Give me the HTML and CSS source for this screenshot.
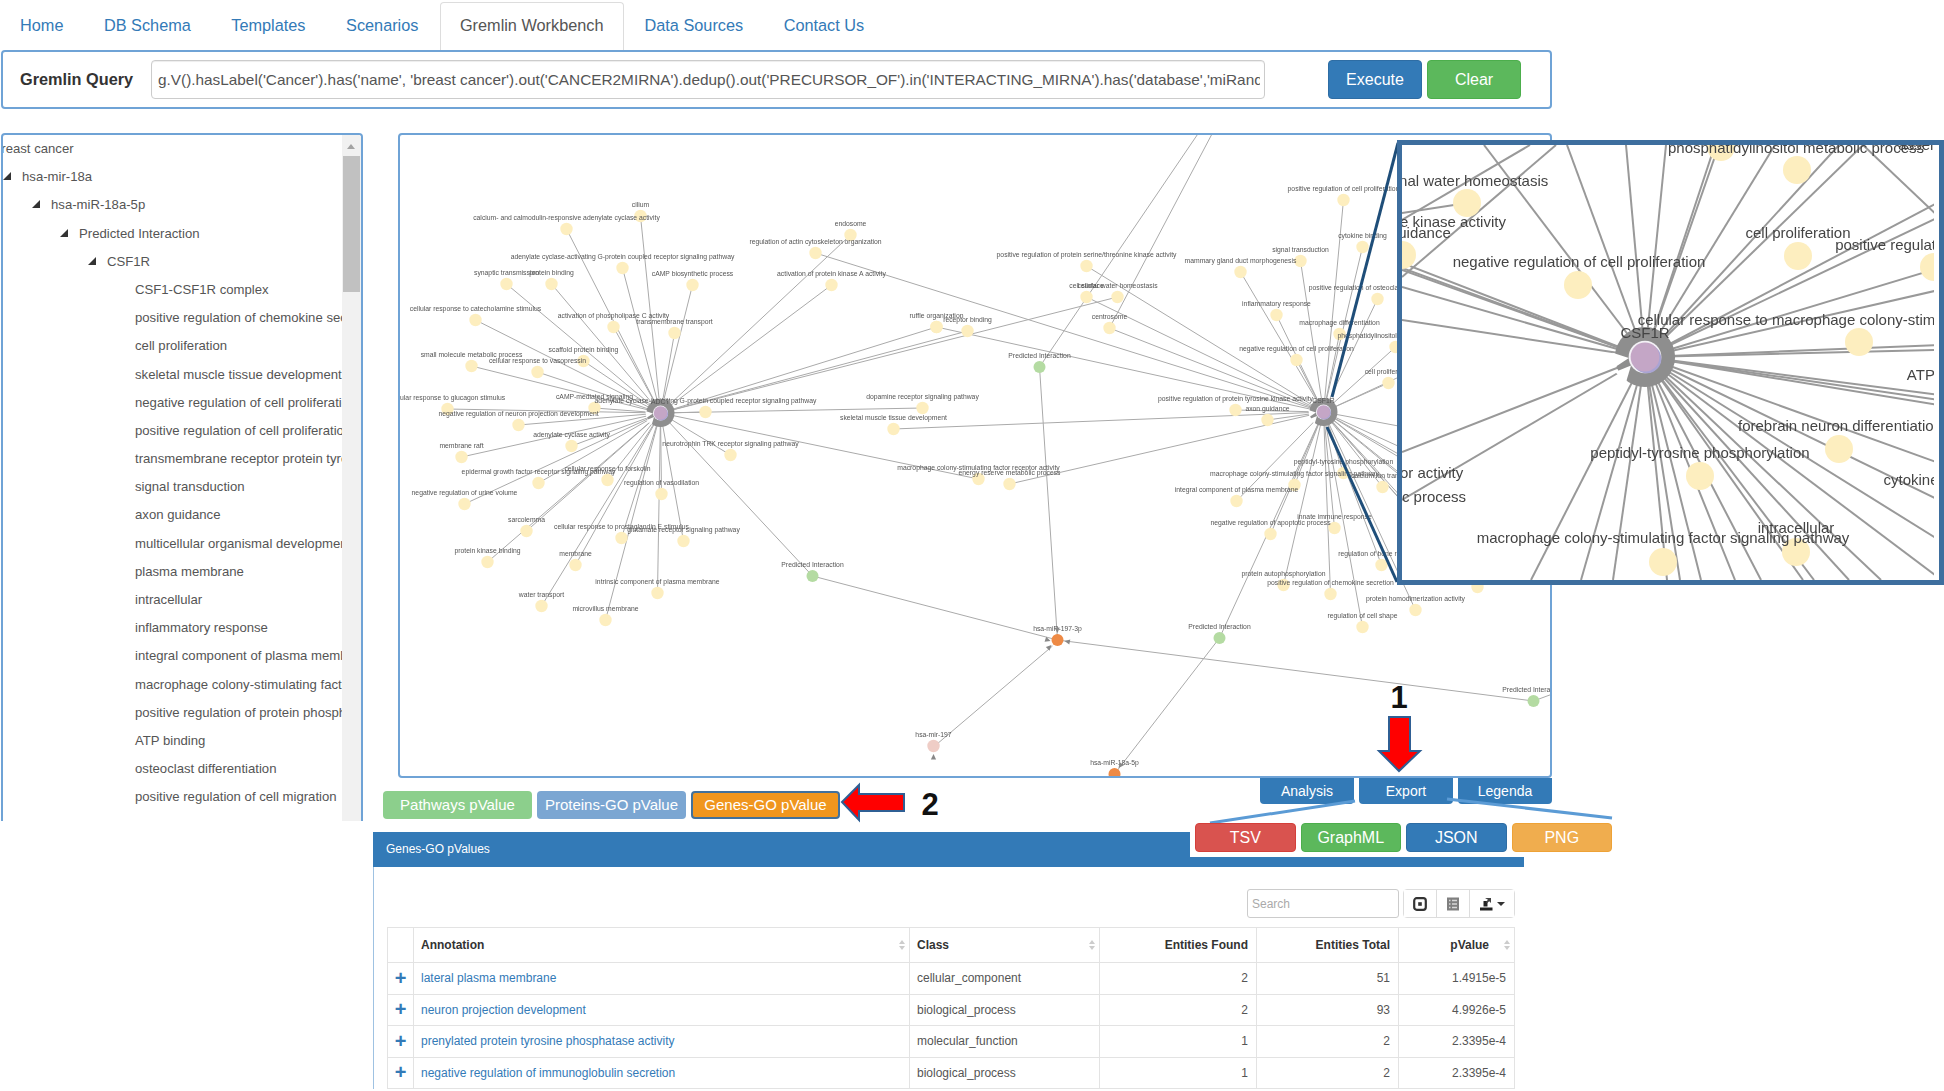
FILE: index.html
```html
<!DOCTYPE html>
<html lang="en">
<head>
  <meta charset="UTF-8" />
  <title>Gremlin Workbench</title>
  <link rel="stylesheet" href="styles.css">
</head>
<body>
  <div class="page">
    <ul class="tabs">
      <li><a href="#">Home</a></li>
      <li><a href="#">DB Schema</a></li>
      <li><a href="#">Templates</a></li>
      <li><a href="#">Scenarios</a></li>
      <li class="active"><a href="#">Gremlin Workbench</a></li>
      <li><a href="#">Data Sources</a></li>
      <li><a href="#">Contact Us</a></li>
    </ul>

    <div class="query-panel">
      <label class="query-label" for="query">Gremlin Query</label>
      <input class="query-input" id="query" type="text" value="g.V().hasLabel('Cancer').has('name', 'breast cancer').out('CANCER2MIRNA').dedup().out('PRECURSOR_OF').in('INTERACTING_MIRNA').has('database','miRanda').out('TARGETS')" />
      <button class="btn btn-blue query-btn">Execute</button>
      <button class="btn btn-green query-btn">Clear</button>
    </div>

    <div class="workbench">
      <div class="tree-panel">
        <ul class="tree">
          <li class="root">breast cancer</li>
          <li class="lv1 open">hsa-mir-18a</li>
          <li class="lv2 open">hsa-miR-18a-5p</li>
          <li class="lv3 open">Predicted Interaction</li>
          <li class="lv4 open">CSF1R</li>
          <li class="lv5">CSF1-CSF1R complex</li>
          <li class="lv5">positive regulation of chemokine secretion</li>
          <li class="lv5">cell proliferation</li>
          <li class="lv5">skeletal muscle tissue development</li>
          <li class="lv5">negative regulation of cell proliferation</li>
          <li class="lv5">positive regulation of cell proliferation</li>
          <li class="lv5">transmembrane receptor protein tyrosine kinase</li>
          <li class="lv5">signal transduction</li>
          <li class="lv5">axon guidance</li>
          <li class="lv5">multicellular organismal development</li>
          <li class="lv5">plasma membrane</li>
          <li class="lv5">intracellular</li>
          <li class="lv5">inflammatory response</li>
          <li class="lv5">integral component of plasma membrane</li>
          <li class="lv5">macrophage colony-stimulating factor</li>
          <li class="lv5">positive regulation of protein phosphorylation</li>
          <li class="lv5">ATP binding</li>
          <li class="lv5">osteoclast differentiation</li>
          <li class="lv5">positive regulation of cell migration</li>
          <li class="lv5">efflux organization</li>
        </ul>
        <div class="scrollbar">
          <span class="scroll-up"></span>
          <span class="scroll-thumb"></span>
        </div>
      </div>

      <div class="graph-column">
        <div class="graph-panel">
          <svg id="graph" class="graph-svg" viewBox="400 135 1149 641"></svg>
        </div>
        <div class="graph-controls">
          <div class="pvalue-btns">
            <button class="btn btn-pathways">Pathways pValue</button>
            <button class="btn btn-proteins">Proteins-GO pValue</button>
            <button class="btn btn-genes">Genes-GO pValue</button>
          </div>
          <div class="graph-tabs">
            <button class="graph-tab">Analysis</button>
            <button class="graph-tab">Export</button>
            <button class="graph-tab">Legenda</button>
          </div>
        </div>
      </div>
    </div>

    <div class="result-panel">
      <div class="result-heading">Genes-GO pValues</div>
      <div class="result-body">
        <div class="toolbar">
          <input class="search" type="text" placeholder="Search" />
          <div class="btn-group">
            <button class="tool-btn">
              <svg width="14" height="14" viewBox="0 0 14 14"><rect x="1.2" y="1.2" width="11.6" height="11.6" rx="2.5" fill="none" stroke="#333" stroke-width="2.2"/><rect x="5.2" y="5.2" width="3.6" height="3.6" fill="#333"/></svg>
            </button>
            <button class="tool-btn">
              <svg width="14" height="14" viewBox="0 0 14 14"><rect x="1" y="0.5" width="12" height="13" fill="#808080"/><path d="M3 3.5h1.5M3 7h1.5M3 10.5h1.5M6 3.5h5M6 7h5M6 10.5h5" stroke="#d8d8d8" stroke-width="1.4"/></svg>
            </button>
            <button class="tool-btn tool-export">
              <svg width="15" height="14" viewBox="0 0 15 14"><rect x="1" y="10.5" width="12.5" height="3" fill="#222"/><path d="M4.5 9.5V4h4V9.5z" fill="#222"/><path d="M6 1H12V6L10.2 4.2 8 6.2 6.8 5 9 2.8z" fill="#444"/></svg>
              <span class="caret"></span>
            </button>
          </div>
        </div>
        <table class="result-table">
          <thead>
            <tr>
              <th class="col-plus"></th>
              <th class="col-annot sortable">Annotation</th>
              <th class="col-class sortable">Class</th>
              <th class="col-found num">Entities Found</th>
              <th class="col-total num">Entities Total</th>
              <th class="col-pvalue num sortable">pValue</th>
            </tr>
          </thead>
          <tbody>
            <tr>
              <td class="plus">+</td>
              <td><a href="#">lateral plasma membrane</a></td>
              <td>cellular_component</td>
              <td class="num">2</td><td class="num">51</td><td class="num pv">1.4915e-5</td>
            </tr>
            <tr>
              <td class="plus">+</td>
              <td><a href="#">neuron projection development</a></td>
              <td>biological_process</td>
              <td class="num">2</td><td class="num">93</td><td class="num pv">4.9926e-5</td>
            </tr>
            <tr>
              <td class="plus">+</td>
              <td><a href="#">prenylated protein tyrosine phosphatase activity</a></td>
              <td>molecular_function</td>
              <td class="num">1</td><td class="num">2</td><td class="num pv">2.3395e-4</td>
            </tr>
            <tr>
              <td class="plus">+</td>
              <td><a href="#">negative regulation of immunoglobulin secretion</a></td>
              <td>biological_process</td>
              <td class="num">1</td><td class="num">2</td><td class="num pv">2.3395e-4</td>
            </tr>
          </tbody>
        </table>
      </div>
    </div>

    <!-- callouts drawn over the screenshot -->
    <svg class="callouts" viewBox="0 0 1944 1091">
      <line x1="1398" y1="143" x2="1332" y2="397" class="zoom-line"/>
      <line x1="1327" y1="427" x2="1397" y2="582" class="zoom-line"/>
      <line x1="1355" y1="801" x2="1210" y2="823" class="pop-line"/>
      <line x1="1447" y1="799" x2="1612" y2="818" class="pop-line"/>
      <polygon class="red-arrow" points="1389,717 1410,717 1410,751 1420,751 1399,771 1379,751 1389,751"/>
      <polygon class="red-arrow" points="904,794 904,811 859,811 859,820 842,802 859,785 859,794"/>
      <text x="1399" y="708" class="step">1</text>
      <text x="930" y="815" class="step">2</text>
    </svg>

    <div class="inset">
      <svg id="inset" class="inset-svg" viewBox="1402 145 532 435"></svg>
    </div>

    <div class="export-pop">
      <button class="btn pop-btn btn-red">TSV</button>
      <button class="btn pop-btn btn-green">GraphML</button>
      <button class="btn pop-btn btn-blue">JSON</button>
      <button class="btn pop-btn btn-amber">PNG</button>
    </div>
  </div>
  <script src="graph.js"></script>
</body>
</html>
```

FILE: styles.css
```css
* {
  box-sizing: border-box;
}
body {
  margin: 0;
  background: white;
  font-family: "Liberation Sans", Arial, sans-serif;
  color: #555;
}
button {
  font-family: inherit;
  cursor: pointer;
}
.page {
  position: relative;
  width: 1944px;
  height: 1091px;
  overflow: hidden;
}

/* top tabs */
.tabs {
  display: flex;
  list-style: none;
  margin: 0;
  padding: 2px 0 0 0;
  height: 51px;
}
.tabs li {
  padding: 14px 20px 0;
  margin-right: 0.5px;
  font-size: 16.3px;
}
.tabs a {
  color: #337ab7;
  text-decoration: none;
}
.tabs .active {
  background: white;
  border: 1px solid #ddd;
  border-bottom: none;
  border-radius: 4px 4px 0 0;
  margin-left: 1px;
  margin-right: 1px;
  height: 50px;
  padding: 13px 19px 0;
}
.tabs .active a {
  color: #555;
}

/* query bar */
.query-panel {
  display: flex;
  align-items: center;
  width: 1551px;
  height: 59px;
  margin-left: 1px;
  margin-top: -1px;
  border: 2px solid #6fa3d6;
  border-radius: 4px;
  background: white;
  position: relative;
}
.query-label {
  width: 148px;
  padding-left: 17px;
  font-size: 16.3px;
  font-weight: bold;
  color: #333;
}
.query-input {
  width: 1114px;
  height: 39px;
  padding: 0 4px 0 6px;
  border: 1px solid #ccc;
  border-radius: 4px;
  font-family: inherit;
  font-size: 15.35px;
  color: #555;
  box-shadow: inset 0 1px 1px rgba(0, 0, 0, 0.075);
}
.btn {
  border: 1px solid transparent;
  border-radius: 4px;
  color: white;
  font-size: 16px;
  padding: 0;
}
.query-btn {
  width: 94px;
  height: 39px;
}
.query-input + .query-btn {
  margin-left: 63px;
}
.query-btn + .query-btn {
  margin-left: 5px;
}
.btn-blue {
  background: #337ab7;
  border-color: #2e6da4;
}
.btn-green {
  background: #5cb85c;
  border-color: #4cae4c;
}
.btn-red {
  background: #d9534f;
  border-color: #d43f3a;
}
.btn-amber {
  background: #f0ad4e;
  border-color: #eea236;
}

/* tree + graph */
.workbench {
  display: flex;
  margin: 24px 0 0 1px;
  gap: 20px;
}
.tree-panel {
  position: relative;
  width: 362px;
  height: 688px;
  border: 2px solid #6fa3d6;
  border-bottom: none;
  border-radius: 4px 4px 0 0;
  overflow: hidden;
  flex-shrink: 0;
}
.tree {
  list-style: none;
  margin: 0;
  padding: 0;
  width: 339px;
  overflow: hidden;
  font-size: 13.15px;
  color: #555;
}
.tree li {
  height: 28.2px;
  line-height: 28.2px;
  white-space: nowrap;
  position: relative;
  top: -1px;
}
.tree .root {
  margin-top: 1px;
  margin-left: -12px;
  text-indent: 3px;
}
.tree .lv1 { padding-left: 19px; }
.tree .lv2 { padding-left: 48px; }
.tree .lv3 { padding-left: 76px; }
.tree .lv4 { padding-left: 104px; }
.tree .lv5 { padding-left: 132px; }
.tree .open::before {
  content: "";
  position: absolute;
  top: 9px;
  margin-left: -19px;
  border-left: 8px solid transparent;
  border-bottom: 8px solid #333;
}
.scrollbar {
  position: absolute;
  top: 0;
  bottom: 0;
  right: 0;
  width: 19px;
  background: #f1f1f1;
}
.scroll-up {
  position: absolute;
  top: 9px;
  left: 5px;
  border-left: 4px solid transparent;
  border-right: 4px solid transparent;
  border-bottom: 5px solid #a3a3a3;
}
.scroll-thumb {
  position: absolute;
  top: 21px;
  left: 1px;
  width: 17px;
  height: 136px;
  background: #c1c1c1;
}
.graph-column {
  width: 1169px;
}
.graph-panel {
  width: 1154px;
  height: 645px;
  margin-left: 15px;
  border: 2px solid #6fa3d6;
  border-radius: 4px;
  background: white;
  overflow: hidden;
}
.graph-svg {
  display: block;
  width: 1150px;
  height: 641px;
  filter: blur(0.45px);
}
.graph-svg line,
.inset-svg line {
  stroke: #aaa;
}
.graph-svg text {
  font-size: 6.8px;
  fill: #555;
  text-anchor: middle;
}
.graph-controls {
  display: flex;
  justify-content: space-between;
  align-items: flex-start;
}
.pvalue-btns {
  display: flex;
  gap: 5px;
  margin-top: 13px;
}
.pvalue-btns .btn {
  width: 149px;
  height: 28px;
  padding-bottom: 2px;
  font-size: 15px;
}
.btn-pathways {
  background: #8ccf8c;
}
.btn-proteins {
  background: #7ba6d2;
}
.pvalue-btns .btn-genes {
  background: #f0961e;
  border: 2px solid #41719c;
}
.graph-tabs {
  display: flex;
  gap: 5px;
}
.graph-tab {
  width: 94px;
  height: 26px;
  background: #337ab7;
  border: none;
  border-radius: 0 0 4px 4px;
  color: white;
  font-size: 14px;
}

/* results */
.result-panel {
  width: 1151px;
  margin: 11px 0 0 373px;
  border-left: 1px solid #9fc2e2;
}
.result-heading {
  height: 35px;
  margin-left: -1px;
  padding: 10px 13px;
  background: #337ab7;
  color: white;
  font-size: 12px;
}
.result-body {
  padding: 22px 9px 0 13px;
}
.toolbar {
  display: flex;
  justify-content: flex-end;
  gap: 4px;
  height: 38px;
}
.search {
  width: 152px;
  height: 29px;
  padding: 0 4px;
  border: 1px solid #ccc;
  border-radius: 3px;
  font-family: inherit;
  font-size: 12px;
}
.search::placeholder {
  color: #aaa;
}
.btn-group {
  display: flex;
  height: 29px;
  border: 1px solid #ddd;
  border-radius: 4px;
}
.tool-btn {
  display: flex;
  align-items: center;
  justify-content: center;
  width: 33px;
  padding: 0;
  border: none;
  border-right: 1px solid #ddd;
  background: white;
}
.tool-btn svg {
  display: block;
}
.tool-export {
  width: 44px;
  border-right: none;
  gap: 3px;
}
.caret {
  border-left: 4px solid transparent;
  border-right: 4px solid transparent;
  border-top: 4px solid #333;
}
.result-table {
  width: 1128px;
  border-collapse: collapse;
  table-layout: fixed;
  font-size: 12px;
  color: #555;
}
.result-table th,
.result-table td {
  height: 31.5px;
  padding: 0 8px 0 7px;
  border: 1px solid #e3e3e3;
  text-align: left;
  overflow: hidden;
  white-space: nowrap;
}
.result-table th {
  height: 35px;
  color: #333;
}
.col-plus { width: 26px; }
.col-annot { width: 496px; }
.col-class { width: 190px; }
.col-found { width: 157px; }
.col-total { width: 142px; }
.result-table .num {
  text-align: right;
}
.result-table .pv {
  padding-right: 8px;
}
.result-table .col-pvalue {
  padding-right: 25px;
}
.sortable {
  position: relative;
}
.sortable::before,
.sortable::after {
  content: "";
  position: absolute;
  right: 4px;
  border-left: 3px solid transparent;
  border-right: 3px solid transparent;
}
.sortable::before {
  top: 12px;
  border-bottom: 4px solid #ccc;
}
.sortable::after {
  top: 18px;
  border-top: 4px solid #ccc;
}
.result-table a {
  color: #337ab7;
  text-decoration: none;
}
.result-table .plus {
  padding: 0;
  text-align: center;
  color: #337ab7;
  font-size: 20px;
  font-weight: bold;
}

/* overlays */
.callouts {
  position: absolute;
  top: 0;
  left: 0;
  width: 1944px;
  height: 1091px;
  pointer-events: none;
}
.zoom-line {
  stroke: #1f4e79;
  stroke-width: 3;
}
.pop-line {
  stroke: #5b9bd5;
  stroke-width: 3;
}
.red-arrow {
  fill: #f00;
  stroke: #2f5f94;
  stroke-width: 2;
}
.step {
  font-size: 31px;
  font-weight: bold;
  fill: #111;
  text-anchor: middle;
}
.inset {
  position: absolute;
  left: 1397px;
  top: 140px;
  width: 547px;
  height: 445px;
  padding-right: 5px;
  border: 5px solid #3d6e9e;
  background: white;
}
.inset-svg {
  display: block;
  width: 532px;
  height: 435px;
  filter: blur(0.3px);
}
.inset-svg line {
  stroke: #999;
  stroke-width: 2;
}
.inset-svg text {
  font-size: 15px;
  fill: #444;
}
.export-pop {
  position: absolute;
  left: 1190px;
  top: 823px;
  width: 422px;
  height: 34px;
  padding: 0 0 5px 5px;
  display: flex;
  gap: 5px;
  background: white;
}
.pop-btn {
  width: 101px;
  height: 29px;
}
```

FILE: graph.js
```js
// Sample network: [x, y, label], in page coordinates
const hub1 = { x: 660, y: 413, label: 'adenylate cyclase-inhibiting G-protein' };
const hub2 = { x: 1323, y: 412, label: 'CSF1R' };

const hub1Nodes = [
  [640, 216, 'cilium'],
  [566, 229, 'calcium- and calmodulin-responsive adenylate cyclase activity'],
  [850, 235, 'endosome'],
  [622, 268, 'adenylate cyclase-activating G-protein coupled receptor signaling pathway'],
  [506, 284, 'synaptic transmission'],
  [551, 284, 'protein binding'],
  [692, 285, 'cAMP biosynthetic process'],
  [831, 285, 'activation of protein kinase A activity'],
  [475, 320, 'cellular response to catecholamine stimulus'],
  [613, 327, 'activation of phospholipase C activity'],
  [674, 333, 'transmembrane transport'],
  [583, 361, 'scaffold protein binding'],
  [471, 366, 'small molecule metabolic process'],
  [537, 372, 'cellular response to vasopressin'],
  [447, 409, 'cellular response to glucagon stimulus'],
  [594, 408, 'cAMP-mediated signaling'],
  [705, 412, 'adenylate cyclase-inhibiting G-protein coupled receptor signaling pathway'],
  [922, 408, 'dopamine receptor signaling pathway'],
  [518, 425, 'negative regulation of neuron projection development'],
  [571, 446, 'adenylate cyclase activity'],
  [461, 457, 'membrane raft'],
  [730, 455, 'neurotrophin TRK receptor signaling pathway'],
  [538, 483, 'epidermal growth factor receptor signaling pathway'],
  [607, 480, 'cellular response to forskolin'],
  [464, 504, 'negative regulation of urine volume'],
  [661, 494, 'regulation of vasodilation'],
  [526, 531, 'sarcolemma'],
  [621, 538, 'cellular response to prostaglandin E stimulus'],
  [683, 541, 'glutamate receptor signaling pathway'],
  [487, 562, 'protein kinase binding'],
  [575, 565, 'membrane'],
  [657, 593, 'intrinsic component of plasma membrane'],
  [541, 606, 'water transport'],
  [605, 620, 'microvillus membrane'],
  [936, 327, 'ruffle organization'],
  [967, 331, 'receptor binding'],
  [1117, 297, 'cellular water homeostasis'],
  [978, 479, 'macrophage colony-stimulating factor receptor activity']
];

const hub2Nodes = [
  [815, 253, 'regulation of actin cytoskeleton organization'],
  [893, 429, 'skeletal muscle tissue development'],
  [936, 327, ''],
  [1086, 266, 'positive regulation of protein serine/threonine kinase activity'],
  [1086, 297, 'cell surface'],
  [1109, 328, 'centrosome'],
  [1343, 200, 'positive regulation of cell proliferation'],
  [1362, 247, 'cytokine binding'],
  [1300, 261, 'signal transduction'],
  [1240, 272, 'mammary gland duct morphogenesis'],
  [1276, 315, 'inflammatory response'],
  [1377, 299, 'positive regulation of osteoclast differentiation'],
  [1339, 334, 'macrophage differentiation'],
  [1395, 347, 'phosphatidylinositol metabolic process'],
  [1296, 360, 'negative regulation of cell proliferation'],
  [1388, 383, 'cell proliferation'],
  [1235, 410, 'positive regulation of protein tyrosine kinase activity'],
  [1267, 420, 'axon guidance'],
  [1009, 484, 'energy reserve metabolic process'],
  [1343, 473, 'peptidyl-tyrosine phosphorylation'],
  [1294, 485, 'macrophage colony-stimulating factor signaling pathway'],
  [1236, 501, 'integral component of plasma membrane'],
  [1382, 487, 'calcium ion transport'],
  [1334, 528, 'innate immune response'],
  [1270, 534, 'negative regulation of apoptotic process'],
  [1381, 565, 'regulation of bone resorption'],
  [1283, 585, 'protein autophosphorylation'],
  [1330, 594, 'positive regulation of chemokine secretion'],
  [1415, 610, 'protein homodimerization activity'],
  [1362, 627, 'regulation of cell shape'],
  [1477, 587, '']
];

// edges running off behind the close-up
const hub2Hidden = [
  [1500, 330], [1500, 445], [1480, 500], [1470, 530], [1450, 470], [1440, 540],
  [1420, 470], [1405, 480], [1400, 500]
];

const interactions = [
  { x: 812, y: 576, to: [hub1, { x: 1057, y: 640 }] },
  { x: 1039, y: 367, to: [{ x: 1198, y: 133 }, { x: 1057, y: 640 }] },
  { x: 1219, y: 638, to: [hub2, { x: 1114, y: 774 }] },
  { x: 1533, y: 701, to: [{ x: 1552, y: 694 }, { x: 1057, y: 640 }] }
];

const SVG_NS = 'http://www.w3.org/2000/svg';

function add(svg, tag, attrs, text) {
  const el = document.createElementNS(SVG_NS, tag);
  Object.keys(attrs).forEach(k => el.setAttribute(k, attrs[k]));
  if (text) el.textContent = text;
  svg.appendChild(el);
  return el;
}

function edge(svg, x1, y1, x2, y2) {
  add(svg, 'line', { x1, y1, x2, y2 });
}

function node(svg, x, y, r, fill, label) {
  add(svg, 'circle', { cx: x, cy: y, r, fill });
  if (label) add(svg, 'text', { x, y: y - 9 }, label);
}

// Small triangle pointing at (x, y), coming from (fx, fy)
function arrowHead(svg, x, y, fx, fy, size, fill) {
  const a = Math.atan2(fy - y, fx - x);
  const p = [
    [x, y],
    [x + size * Math.cos(a + 0.45), y + size * Math.sin(a + 0.45)],
    [x + size * Math.cos(a - 0.45), y + size * Math.sin(a - 0.45)]
  ];
  add(svg, 'polygon', { points: p.map(c => c.join(',')).join(' '), fill });
}

function hubNode(svg, hub, s) {
  add(svg, 'circle', { cx: hub.x, cy: hub.y, r: 14 * s, fill: '#8e8e8e' });
  add(svg, 'circle', { cx: hub.x, cy: hub.y, r: 7.6 * s, fill: '#f3f1f6' });
  add(svg, 'circle', { cx: hub.x + 0.8 * s, cy: hub.y + 0.8 * s, r: 6.8 * s, fill: '#a9a4d4' });
  add(svg, 'circle', { cx: hub.x, cy: hub.y, r: 6.7 * s, fill: '#c4a6c6' });
  arrowHead(svg, hub.x - 7.5 * s, hub.y + 0.5 * s, hub.x - 15 * s, hub.y + 1.5 * s, 8 * s, '#fff');
  arrowHead(svg, hub.x - 6.5 * s, hub.y + 4 * s, hub.x - 12 * s, hub.y + 10 * s, 8 * s, '#fff');
}

function drawGraph() {
  const svg = document.getElementById('graph');

  hub1Nodes.forEach(n => edge(svg, n[0], n[1], hub1.x, hub1.y));
  hub2Nodes.forEach(n => edge(svg, n[0], n[1], hub2.x, hub2.y));
  hub2Hidden.forEach(n => edge(svg, n[0], n[1], hub2.x, hub2.y));
  edge(svg, 1109, 328, 1212, 133);
  interactions.forEach(n => n.to.forEach(t => edge(svg, n.x, n.y, t.x, t.y)));
  edge(svg, 933, 747, 1052, 646);

  hub1Nodes.concat(hub2Nodes).forEach(n => node(svg, n[0], n[1], 6.2, '#fdeebf', n[2]));
  interactions.forEach(n => node(svg, n.x, n.y, 6, '#b4dba2', 'Predicted Interaction'));

  hubNode(svg, hub1, 1);
  hubNode(svg, hub2, 1);
  add(svg, 'text', { x: hub1.x, y: hub1.y - 9 }, 'ADCY');
  add(svg, 'text', { x: hub2.x, y: hub2.y - 9 }, 'CSF1R');

  node(svg, 1057, 640, 6, '#ee8a45', 'hsa-miR-197-3p');
  node(svg, 1114, 774, 6, '#ee8a45', 'hsa-miR-18a-5p');
  node(svg, 933, 746, 6.2, '#efcdc6', 'hsa-mir-197');
  arrowHead(svg, 1050, 641, 1035, 636, 6, '#888');
  arrowHead(svg, 1064, 641, 1079, 644, 6, '#888');
  arrowHead(svg, 1057, 633, 1056, 620, 6, '#888');
  arrowHead(svg, 1051, 645, 1041, 655, 6, '#888');
  arrowHead(svg, 933, 754, 933, 768, 6, '#888');
  arrowHead(svg, 1118, 768, 1128, 755, 6, '#888');
}

// Close-up of the CSF1R node
function drawInset() {
  const svg = document.getElementById('inset');
  const hub = { x: 1645, y: 357 };

  const spokes = [
    [1484, 145], [1567, 145], [1626, 145], [1666, 145], [1715, 145], [1719, 145],
    [1775, 145], [1839, 145], [1863, 145],
    [1939, 202], [1939, 217], [1939, 268], [1939, 290], [1939, 345], [1939, 350], [1939, 395],
    [1939, 400], [1939, 405], [1939, 463], [1939, 500], [1939, 540], [1939, 578],
    [1881, 580], [1849, 580], [1814, 580], [1803, 580], [1761, 580], [1735, 580], [1701, 580],
    [1680, 580], [1667, 580], [1613, 580], [1581, 580], [1531, 580],
    [1402, 452], [1402, 500], [1402, 320], [1402, 287], [1402, 270], [1402, 263], [1402, 268]
  ];
  spokes.forEach(p => edge(svg, hub.x, hub.y, p[0], p[1]));

  // edges that do not touch this node
  edge(svg, 1556, 145, 1402, 277);
  edge(svg, 1530, 145, 1402, 220);
  edge(svg, 1402, 213, 1454, 205);
  edge(svg, 1863, 145, 1939, 217);

  const spots = [
    [1721, 147], [1797, 170], [1467, 203], [1402, 255], [1578, 285], [1798, 256],
    [1934, 267], [1859, 342], [1839, 449], [1700, 476], [1663, 562], [1796, 552]
  ];
  spots.forEach(p => add(svg, 'circle', { cx: p[0], cy: p[1], r: 14, fill: '#fdeebf' }));

  hubNode(svg, hub, 2.15);

  const labels = [
    ['phosphatidylinositol metabolic process', 1796, 153],
    ['assembly', 1930, 150],
    ['renal water homeostasis', 1467, 186],
    ['positive regulation of protein tyrosine kinase activity', 1335, 227],
    ['axon guidance', 1402, 238],
    ['negative regulation of cell proliferation', 1579, 267],
    ['cell proliferation', 1798, 238],
    ['positive regulation of protein phosphorylation', 1984, 250],
    ['cellular response to macrophage colony-stimulating factor stimulus', 1859, 325],
    ['CSF1R', 1645, 338],
    ['ATP binding', 1947, 380],
    ['forebrain neuron differentiation', 1840, 431],
    ['cytokine activity', 1936, 485],
    ['peptidyl-tyrosine phosphorylation', 1700, 458],
    ['macrophage colony-stimulating factor receptor activity', 1284, 478],
    ['small molecule metabolic process', 1354, 502],
    ['macrophage colony-stimulating factor signaling pathway', 1663, 543],
    ['intracellular', 1796, 533]
  ];
  labels.forEach(l => add(svg, 'text', { x: l[1], y: l[2], 'text-anchor': 'middle' }, l[0]));
}

drawGraph();
drawInset();
```
